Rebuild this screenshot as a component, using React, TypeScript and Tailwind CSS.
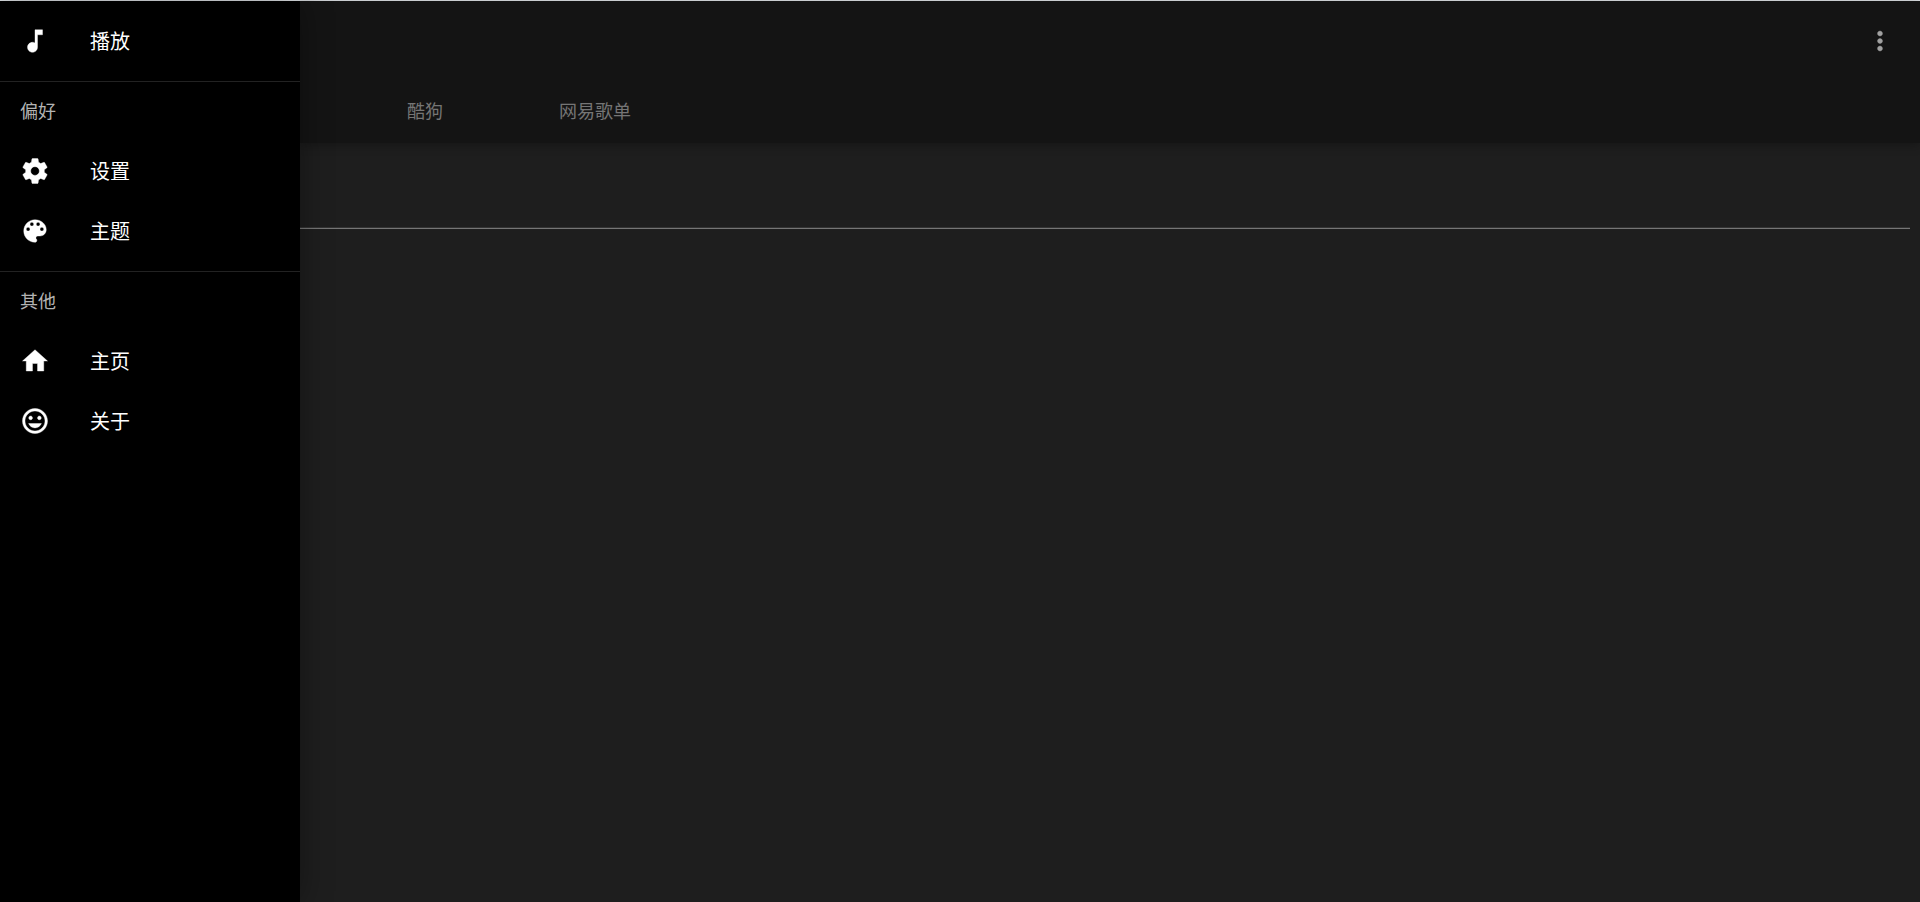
import React from 'react';

interface IconProps {
  path: string;
}

interface DrawerItem {
  label: string;
  icon: string;
}

interface DrawerSection {
  title?: string;
  items: DrawerItem[];
}

const icons = {
  note: 'M12 3v10.55c-.59-.34-1.27-.55-2-.55-2.21 0-4 1.79-4 4s1.79 4 4 4 4-1.79 4-4V7h4V3h-6z',
  settings:
    'M19.43 12.98c.04-.32.07-.64.07-.98s-.03-.66-.07-.98l2.11-1.65c.19-.15.24-.42.12-.64l-2-3.46c-.12-.22-.39-.3-.61-.22l-2.49 1c-.52-.4-1.08-.73-1.69-.98l-.38-2.65C14.46 2.18 14.25 2 14 2h-4c-.25 0-.46.18-.49.42l-.38 2.65c-.61.25-1.17.59-1.69.98l-2.49-1c-.23-.09-.49 0-.61.22l-2 3.46c-.13.22-.07.49.12.64l2.11 1.65c-.04.32-.07.65-.07.98s.03.66.07.98l-2.11 1.65c-.19.15-.24.42-.12.64l2 3.46c.12.22.39.3.61.22l2.49-1c.52.4 1.08.73 1.69.98l.38 2.65c.03.24.24.42.49.42h4c.25 0 .46-.18.49-.42l.38-2.65c.61-.25 1.17-.59 1.69-.98l2.49 1c.23.09.49 0 .61-.22l2-3.46c.12-.22.07-.49-.12-.64l-2.11-1.65zM12 15.5c-1.93 0-3.5-1.57-3.5-3.5s1.57-3.5 3.5-3.5 3.5 1.57 3.5 3.5-1.57 3.5-3.5 3.5z',
  palette:
    'M12 3c-4.97 0-9 4.03-9 9s4.03 9 9 9c.83 0 1.5-.67 1.5-1.5 0-.39-.15-.74-.39-1.01-.23-.26-.38-.61-.38-.99 0-.83.67-1.5 1.5-1.5H16c2.76 0 5-2.24 5-5 0-4.42-4.03-8-9-8zm-5.5 9c-.83 0-1.5-.67-1.5-1.5S5.67 9 6.5 9 8 9.67 8 10.5 7.33 12 6.5 12zm3-4C8.67 8 8 7.33 8 6.5S8.67 5 9.5 5s1.5.67 1.5 1.5S10.33 8 9.5 8zm5 0c-.83 0-1.5-.67-1.5-1.5S13.67 5 14.5 5s1.5.67 1.5 1.5S15.33 8 14.5 8zm3 4c-.83 0-1.5-.67-1.5-1.5S16.67 9 17.5 9s1.5.67 1.5 1.5-.67 1.5-1.5 1.5z',
  home: 'M10 20v-6h4v6h5v-8h3L12 3 2 12h3v8z',
  mood: 'M11.99 2C6.47 2 2 6.48 2 12s4.47 10 9.99 10C17.52 22 22 17.52 22 12S17.52 2 11.99 2zM12 20c-4.42 0-8-3.58-8-8s3.58-8 8-8 8 3.58 8 8-3.58 8-8 8zm3.5-9c.83 0 1.5-.67 1.5-1.5S16.33 8 15.5 8 14 8.67 14 9.5s.67 1.5 1.5 1.5zm-7 0c.83 0 1.5-.67 1.5-1.5S9.33 8 8.5 8 7 8.67 7 9.5 7.67 11 8.5 11zm3.5 6.5c2.33 0 4.31-1.46 5.11-3.5H6.89c.8 2.04 2.78 3.5 5.11 3.5z',
  more: 'M12 8c1.1 0 2-.9 2-2s-.9-2-2-2-2 .9-2 2 .9 2 2 2zm0 2c-1.1 0-2 .9-2 2s.9 2 2 2 2-.9 2-2-.9-2-2-2zm0 6c-1.1 0-2 .9-2 2s.9 2 2 2 2-.9 2-2-.9-2-2-2z',
};

const sections: DrawerSection[] = [
  {
    items: [{ label: '播放', icon: icons.note }],
  },
  {
    title: '偏好',
    items: [
      { label: '设置', icon: icons.settings },
      { label: '主题', icon: icons.palette },
    ],
  },
  {
    title: '其他',
    items: [
      { label: '主页', icon: icons.home },
      { label: '关于', icon: icons.mood },
    ],
  },
];

const tabs = ['酷狗', '网易歌单'];

function Icon({ path }: IconProps) {
  return (
    <svg
      className="size-[30px] shrink-0"
      viewBox="0 0 24 24"
      fill="currentColor"
      stroke="currentColor"
      strokeWidth={0.3}
      aria-hidden="true"
    >
      <path d={path} />
    </svg>
  );
}

function Drawer() {
  return (
    <aside className="relative z-20 w-[300px] shrink-0 bg-black shadow-[0_0_30px_rgba(0,0,0,0.35)]">
      {sections.map((section, idx) => (
        <section key={idx} className={section.title ? 'pb-2.5' : 'py-2.5'}>
          {section.title && (
            <h2 className="flex h-[60px] items-center border-t border-[#222222] px-5 pb-1 text-lg text-[#b3b3b3]">
              {section.title}
            </h2>
          )}
          <ul>
            {section.items.map((item) => (
              <li key={item.label}>
                <a href="#" className="flex h-[60px] items-center gap-10 px-5 text-xl text-white">
                  <Icon path={item.icon} />
                  {item.label}
                </a>
              </li>
            ))}
          </ul>
        </section>
      ))}
    </aside>
  );
}

function AppBar() {
  return (
    <header className="relative z-10 bg-[#141414] pb-0.5 shadow-[0_2px_10px_rgba(0,0,0,0.3)]">
      <div className="flex h-20 items-center justify-end px-[15px]">
        <button type="button" aria-label="更多" className="p-2.5 text-[#a1a1a1]">
          <Icon path={icons.more} />
        </button>
      </div>
      <nav className="flex pl-[49px]">
        {tabs.map((tab) => (
          <button key={tab} type="button" className="h-[60px] px-[58px] pb-0.5 text-lg text-[#757575]">
            {tab}
          </button>
        ))}
      </nav>
    </header>
  );
}

export default function App() {
  return (
    <div className="flex min-h-screen flex-col border-t border-[#dfe3e6] bg-[#1e1e1e] font-['Noto_Sans_CJK_SC',sans-serif]">
      <div className="flex grow">
        <Drawer />
        <main className="min-w-0 grow">
          <AppBar />
          <div className="pt-[38px] pr-2.5">
            <input
              type="text"
              aria-label="搜索"
              className="block h-12 w-full border-b border-[#757575] bg-transparent text-xl text-white shadow-[inset_0_-1px_0_#333333] outline-none"
            />
          </div>
        </main>
      </div>
    </div>
  );
}
